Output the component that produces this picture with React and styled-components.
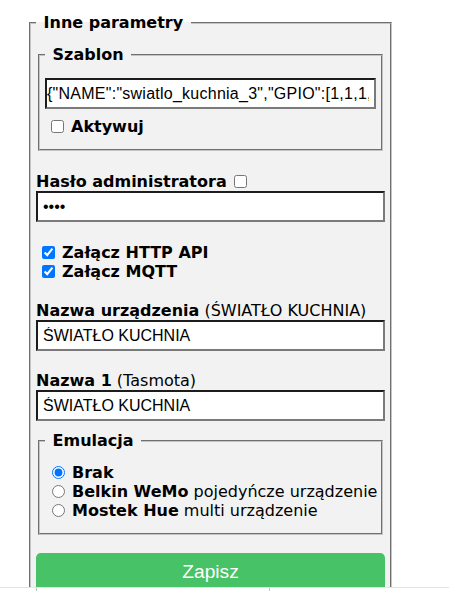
import styled, { createGlobalStyle } from "styled-components";

const GlobalStyle = createGlobalStyle`
  html, body {
    margin: 0;
    padding: 0;
    background: #fff;
    overflow: hidden;
  }

  body {
    font-family: "DejaVu Sans", Verdana, sans-serif;
    font-size: 16px;
    color: #000;
  }
`;

const Viewport = styled.div`
  height: 587px;
  overflow: hidden;
  box-sizing: border-box;
  padding: 13px 0 0 29px;
`;

const Section = styled.fieldset`
  box-sizing: border-box;
  width: 363px;
  min-width: 0;
  margin: 0;
  padding: 5px;
  border: 2px groove #c4c4c4;
  background: #f2f2f2;
`;

const Group = styled(Section)`
  width: auto;
  margin: ${(p) => p.$top || 0}px 2px 0;
`;

const Legend = styled.legend`
  padding: 0 2px;
  font-weight: bold;
  line-height: normal;
`;

const TextInput = styled.input`
  display: block;
  box-sizing: border-box;
  width: 100%;
  height: 31px;
  margin: ${(p) => p.$top || 0}px 0 0;
  padding: 0 5px 0 ${(p) => (p.$flush ? 0 : 5)}px;
  border: 2px solid;
  border-color: #1c1c1c #7a7a7a #7a7a7a #1c1c1c;
  background: #fff;
  font-family: "Liberation Sans", Arial, sans-serif;
  font-size: 16px;
  letter-spacing: ${(p) => (p.$wide ? "0.25px" : "normal")};
  color: #000;
  outline: none;
`;

const FieldLabel = styled.div`
  margin-top: ${(p) => p.$top || 0}px;
  line-height: 18px;
  white-space: nowrap;
`;

const OptionList = styled.div`
  margin: ${(p) => p.$top || 8}px 0 8px;
`;

const OptionRow = styled.label`
  display: flex;
  align-items: center;
  height: 19px;
  margin-top: ${(p) => p.$top || 0}px;
  white-space: nowrap;
`;

const Check = styled.input.attrs({ type: "checkbox" })`
  flex: none;
  width: 13px;
  height: 13px;
  margin: 0 7px 0 6px;
  accent-color: #0075ff;
`;

const InlineCheck = styled.input.attrs({ type: "checkbox" })`
  width: 13px;
  height: 13px;
  margin: 0 0 0 7px;
  vertical-align: -1px;
`;

const Radio = styled.input.attrs({ type: "radio" })`
  flex: none;
  width: 13px;
  height: 13px;
  margin: 0 7px 0 7px;
  accent-color: #0075ff;
`;

const SaveButton = styled.button`
  display: block;
  width: 100%;
  margin-top: 18px;
  padding: 0;
  border: 0;
  border-radius: 0.3rem;
  background: #47c266;
  color: #fff;
  font-family: "Liberation Sans", Arial, sans-serif;
  font-size: 19.2px;
  line-height: 38.4px;
`;

const Strip = styled.div`
  display: flex;
  height: 8px;
  border-top: 1px solid #e4e4e4;
`;

const Tick = styled.span`
  width: 1px;
  height: 3px;
  margin-left: ${(p) => p.$at}px;
  background: #c4c4c4;
`;

const nb = "\u00a0";

const template =
  '{"NAME":"swiatlo_kuchnia_3","GPIO":[1,1,1,1,1,1,1,1,1,1,1,1,1,1],"FLAG":0,"BASE":18}';

const emulations = [
  { bold: "Brak", rest: "", checked: true },
  { bold: "Belkin WeMo", rest: " pojedyńcze urządzenie" },
  { bold: "Mostek Hue", rest: " multi urządzenie" },
];

function App() {
  return (
    <>
      <GlobalStyle />
      <Viewport>
        <Section>
          <Legend>{`${nb}Inne parametry${nb}`}</Legend>

          <Group $top={8}>
            <Legend>{`${nb}Szablon${nb}`}</Legend>
            <TextInput $top={9} $flush $wide defaultValue={template} readOnly />
            <OptionList $top={8}>
              <OptionRow>
                <Check />
                <b>Aktywuj</b>
              </OptionRow>
            </OptionList>
          </Group>

          <FieldLabel $top={22}>
            <b>Hasło administratora</b>
            <InlineCheck />
          </FieldLabel>
          <TextInput type="password" defaultValue="****" readOnly />

          <OptionRow $top={21}>
            <Check defaultChecked />
            <b>Załącz HTTP API</b>
          </OptionRow>
          <OptionRow>
            <Check defaultChecked />
            <b>Załącz MQTT</b>
          </OptionRow>

          <FieldLabel $top={21}>
            <b>Nazwa urządzenia</b> (ŚWIATŁO KUCHNIA)
          </FieldLabel>
          <TextInput defaultValue="ŚWIATŁO KUCHNIA" readOnly />

          <FieldLabel $top={21}>
            <b>Nazwa 1</b> (Tasmota)
          </FieldLabel>
          <TextInput defaultValue="ŚWIATŁO KUCHNIA" readOnly />

          <Group $top={10}>
            <Legend>{`${nb}Emulacja${nb}`}</Legend>
            <OptionList>
              {emulations.map((e) => (
                <OptionRow key={e.bold}>
                  <Radio name="emulation" defaultChecked={e.checked} />
                  <b>{e.bold}</b>
                  {e.rest && <span>{e.rest.replace(" ", nb)}</span>}
                </OptionRow>
              ))}
            </OptionList>
          </Group>

          <SaveButton type="button">Zapisz</SaveButton>
        </Section>
      </Viewport>
      <Strip>
        <Tick $at={36} />
        <Tick $at={232} />
      </Strip>
    </>
  );
}

export default App;
